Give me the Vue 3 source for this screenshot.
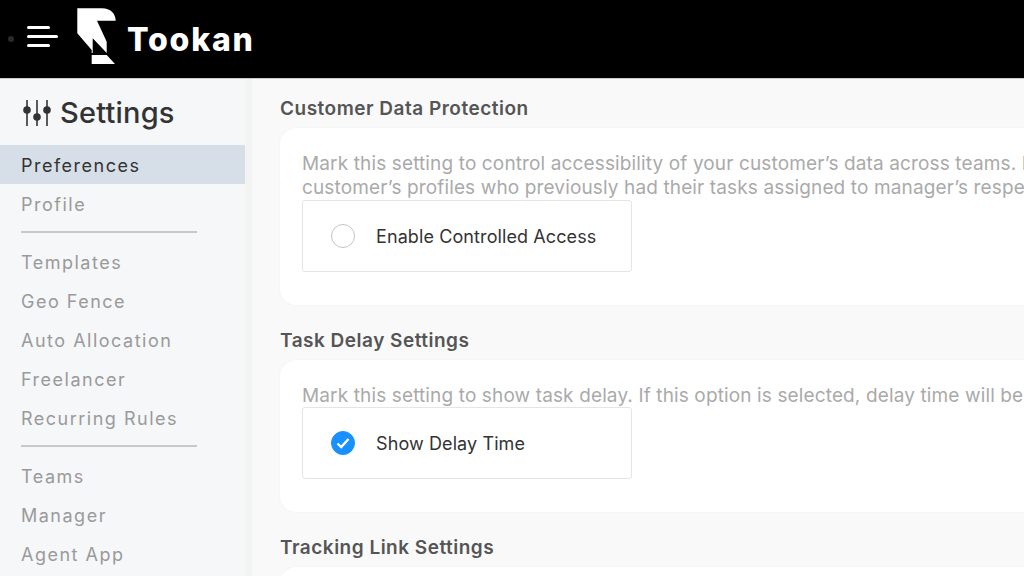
<template>
  <div class="page">
    <header class="topbar">
      <span class="dot"></span>
      <div class="burger">
        <span></span>
        <span></span>
        <span></span>
      </div>
      <svg class="logo" width="40" height="58" viewBox="0 0 40 58">
        <path fill="#fff" d="M0.300 0.300H25Q38 1 38.700 12.700H20L29.700 33.700V45L15.700 30.300V45H14.700V42L0.300 25.300Z" />
        <path fill="#fff" d="M14.700 47H29.700L38 56H14.700Z" />
      </svg>
      <span class="brand">Tookan</span>
    </header>
    <div class="body">
      <aside class="sidebar">
        <div class="side-title">
          <svg width="28" height="28" viewBox="0 0 28 28" fill="none">
            <path d="M4 1V27M14 1V27M24 1V27" stroke="#333" stroke-width="1.600" />
            <circle cx="4" cy="11" r="3.800" fill="#333" />
            <circle cx="14" cy="18" r="3.800" fill="#333" />
            <circle cx="24" cy="11" r="3.800" fill="#333" />
          </svg>
          <span>Settings</span>
        </div>
        <template v-for="(group, i) in menu" :key="i">
          <hr v-if="i > 0" class="divider" />
          <a
            v-for="item in group"
            :key="item"
            class="menu-item"
            :class="{ active: item === 'Preferences' }"
          >{{ item }}</a>
        </template>
      </aside>
      <main class="content">
        <section class="section">
          <h2>Customer Data Protection</h2>
          <div class="card">
            <p>
              Mark this setting to control accessibility of your customer’s data across teams. If this option is selected, managers will only see<br />
              customer’s profiles who previously had their tasks assigned to manager’s respective teams and nobody else in the account.
            </p>
            <label class="option">
              <span class="radio"></span>
              <span>Enable Controlled Access</span>
            </label>
          </div>
        </section>
        <section class="section">
          <h2>Task Delay Settings</h2>
          <div class="card">
            <p class="single">Mark this setting to show task delay. If this option is selected, delay time will be shown on the task details of every delayed task.</p>
            <label class="option">
              <span class="radio checked">
                <svg width="14" height="12" viewBox="0 0 14 12" fill="none">
                  <path d="M1.500 6.500L5.200 10L12.500 2" stroke="#fff" stroke-width="2.400" />
                </svg>
              </span>
              <span>Show Delay Time</span>
            </label>
          </div>
        </section>
        <section class="section">
          <h2>Tracking Link Settings</h2>
          <div class="card"></div>
        </section>
      </main>
    </div>
  </div>
</template>

<script setup>
const menu = [
  ["Preferences", "Profile"],
  ["Templates", "Geo Fence", "Auto Allocation", "Freelancer", "Recurring Rules"],
  ["Teams", "Manager", "Agent App"],
];
</script>

<style>
html,
body {
  margin: 0;
  overflow: hidden;
}
</style>

<style scoped>
.page {
  width: 1024px;
  height: 576px;
  overflow: hidden;
  display: flex;
  flex-direction: column;
  font-family: Inter, "Liberation Sans", sans-serif;
  background: #f9f9f9;
}

.topbar {
  flex: 0 0 79px;
  background: #000;
  border-bottom: 1px solid #ccc;
  box-sizing: border-box;
  display: flex;
  align-items: center;
  padding-left: 8px;
}

.dot {
  width: 6px;
  height: 6px;
  border-radius: 50%;
  background: #2a2a2a;
}

.burger {
  margin-left: 13px;
  width: 31px;
  display: flex;
  flex-direction: column;
  align-items: flex-start;
  gap: 6px;
  margin-top: -5px;
}

.burger span {
  display: block;
  height: 3px;
  width: 23px;
  background: #fff;
  border-radius: 2px;
}

.burger span:nth-child(2) {
  width: 31px;
}

.logo {
  align-self: flex-start;
  margin: 8px 0 0 19px;
}

.brand {
  margin-left: 10px;
  color: #fff;
  font-size: 32px;
  font-weight: 800;
  letter-spacing: 1.800px;
}

.body {
  flex: 1;
  display: flex;
  min-height: 0;
}

.sidebar {
  flex: 0 0 245px;
  background: #f5f7f9;
  border-right: 7px solid #f3f3f3;
  padding-top: 14px;
}

.side-title {
  display: flex;
  align-items: center;
  gap: 9px;
  padding: 0 0 12px 23px;
  color: #333;
  font-size: 29px;
  font-weight: 500;
  line-height: 40px;
  letter-spacing: 0.200px;
}

.menu-item {
  display: block;
  height: 39px;
  line-height: 41px;
  padding-left: 21px;
  font-size: 18px;
  letter-spacing: 1.500px;
  color: #9a9a9a;
}

.menu-item.active {
  background: #d6dee7;
  color: #333;
}

.divider {
  width: 176px;
  height: 2px;
  margin: 8px 0 9px 21px;
  border: 0;
  background: #c9c9c9;
}

.content {
  flex: 1;
  padding: 17px 0 0 28px;
  min-width: 0;
  overflow: hidden;
}

.section {
  margin-bottom: 23px;
}

h2 {
  margin: 0 0 7px;
  font-size: 19px;
  font-weight: 600;
  line-height: 25px;
  letter-spacing: 0.500px;
  color: #555;
  white-space: nowrap;
}

.card {
  background: #fff;
  border-radius: 16px 0 0 16px;
  padding: 24px 0 33px 22px;
  width: 900px;
  min-height: 60px;
  box-shadow: 0 0 2px rgba(0, 0, 0, 0.06);
}

.card p {
  margin: 0;
  font-size: 19px;
  line-height: 24px;
  letter-spacing: 0.130px;
  color: #aaa;
  white-space: nowrap;
}

.card p.single {
  line-height: 23px;
}

.option {
  display: flex;
  align-items: center;
  gap: 21px;
  box-sizing: border-box;
  width: 330px;
  height: 72px;
  padding-left: 28px;
  background: #fff;
  border: 1px solid #e5e5e5;
  border-radius: 3px;
  font-size: 18px;
  letter-spacing: 0.100px;
  color: #333;
}

.radio {
  box-sizing: border-box;
  width: 24px;
  height: 24px;
  border: 1px solid #c4c4c4;
  border-radius: 50%;
  display: flex;
  align-items: center;
  justify-content: center;
}

.radio.checked {
  background: #1890ff;
  border-color: #1890ff;
}
</style>
